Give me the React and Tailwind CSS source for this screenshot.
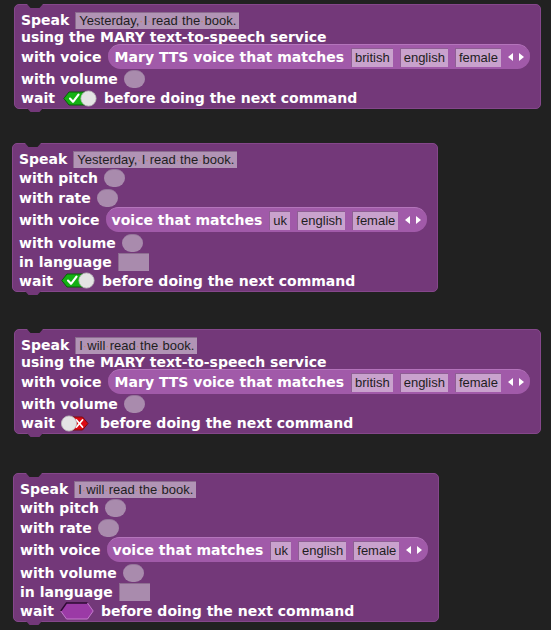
import React from "react";

function Label({ children }) {
  return (
    <span className="text-white font-bold text-[14px] leading-[16px] whitespace-pre font-['DejaVu_Sans',sans-serif]">
      {children}
    </span>
  );
}

function TextSlot({ text }) {
  const parts = text.split(" ");
  return (
    <span className="inline-flex items-center h-[17px] px-[3px] bg-[#b194b5] border-t border-l border-[#8b6b8f] font-['Liberation_Sans',Arial,sans-serif] text-[13px] leading-none text-[#1e1e1e] whitespace-pre">
      {parts.map((p, i) => (
        <React.Fragment key={i}>
          {i > 0 && <span className="text-[#c5876c]">·</span>}
          {p}
        </React.Fragment>
      ))}
    </span>
  );
}

function RoundSlot() {
  return <span className="inline-block w-[21px] h-[18px] rounded-full bg-[#a98bad] border-t border-[#94759a]" />;
}

function RectSlot() {
  return <span className="inline-block w-[31px] h-[18px] bg-[#a98bad] border-t border-l border-[#8d6d91]" />;
}

function PillSlot({ text }) {
  return (
    <span className="inline-flex items-center h-[19px] px-[3px] bg-[#c9a2cd] border-t border-l border-[#8e5f94] font-['Liberation_Sans',Arial,sans-serif] text-[13px] leading-none text-[#1e1e1e] whitespace-pre">
      {text}
    </span>
  );
}

function Arrows() {
  return (
    <span className="inline-flex items-center gap-[6px]">
      <span className="inline-block w-0 h-0 border-y-[4px] border-y-transparent border-r-[5px] border-r-white" />
      <span className="inline-block w-0 h-0 border-y-[4px] border-y-transparent border-l-[5px] border-l-white" />
    </span>
  );
}

function VoicePill({ label, slots, pl }) {
  return (
    <span
      className={
        "inline-flex items-center h-[25px] rounded-full bg-[#a15aa9] border-t border-[#b474bb] pr-[6px] gap-[7px] " +
        pl
      }
    >
      <Label>{label}</Label>
      {slots.map((s) => (
        <PillSlot key={s} text={s} />
      ))}
      <Arrows />
    </span>
  );
}

function ToggleOn() {
  return (
    <svg width="35" height="17" viewBox="0 0 35 17" className="ml-[2px]">
      <polygon points="0.8,8.5 6,2 24,2 24,15 6,15" fill="#14b014" stroke="#0b5a0b" strokeWidth="1" />
      <polyline points="7,8.6 10,11.8 15.5,4.6" fill="none" stroke="#fff" strokeWidth="2.2" strokeLinecap="round" strokeLinejoin="round" />
      <circle cx="25.5" cy="8.5" r="7.6" fill="#e4e4e4" stroke="#bdbdbd" strokeWidth="0.8" />
    </svg>
  );
}

function ToggleOff() {
  return (
    <svg width="33" height="17" viewBox="0 0 33 17">
      <polygon points="9,2 21.5,2 27,8.5 21.5,15 9,15" fill="#dc0a14" stroke="#7d0a10" strokeWidth="1" />
      <line x1="15.5" y1="5" x2="21.5" y2="12" stroke="#fff" strokeWidth="1.8" strokeLinecap="round" />
      <line x1="21.5" y1="5" x2="15.5" y2="12" stroke="#fff" strokeWidth="1.8" strokeLinecap="round" />
      <circle cx="8" cy="8.5" r="7.6" fill="#e4e4e4" stroke="#bdbdbd" strokeWidth="0.8" />
    </svg>
  );
}

function EmptyBool() {
  return (
    <svg width="35" height="18" viewBox="0 0 35 18">
      <polygon points="0.8,9 6.5,1 27.5,1 33.2,9 27.5,17 6.5,17" fill="#9b3aa6" />
      <polyline points="0.8,9 6.5,1 27.5,1" fill="none" stroke="#2e0a33" strokeWidth="1.4" />
      <polyline points="27.5,1 33.2,9 27.5,17 6.5,17 0.8,9" fill="none" stroke="#c47ccc" strokeWidth="1" />
    </svg>
  );
}

function Row({ h, children }) {
  return <div className={"flex items-center gap-[6px] " + h}>{children}</div>;
}

function Block({ className, children }) {
  return (
    <div
      className={
        "relative bg-[#733879] rounded-[5px] border border-[#85478b] pl-[6px] pt-[6px] pb-[1px] " + className
      }
    >
      <div className="absolute left-[12px] top-[-1px] w-[16px] h-[4px] bg-[#212121] [clip-path:polygon(0_0,100%_0,78%_100%,22%_100%)]" />
      <div className="absolute left-[12px] bottom-[-4px] w-[16px] h-[4px] bg-[#733879] [clip-path:polygon(0_0,100%_0,78%_100%,22%_100%)]" />
      {children}
    </div>
  );
}

function MaryBlock({ text, toggle, className }) {
  return (
    <Block className={className}>
      <Row h="h-[18px]">
        <Label>Speak</Label>
        <TextSlot text={text} />
      </Row>
      <Row h="h-[15px]">
        <Label>using the MARY text-to-speech service</Label>
      </Row>
      <Row h="h-[25px]">
        <Label>with voice</Label>
        <VoicePill label="Mary TTS voice that matches" slots={["british", "english", "female"]} pl="pl-[7px]" />
      </Row>
      <Row h="h-[20px]">
        <Label>with volume</Label>
        <RoundSlot />
      </Row>
      <Row h="h-[18px]">
        <Label>wait</Label>
        {toggle}
        <Label>before doing the next command</Label>
      </Row>
    </Block>
  );
}

function FullBlock({ text, toggle, className }) {
  return (
    <Block className={className}>
      <Row h="h-[18px]">
        <Label>Speak</Label>
        <TextSlot text={text} />
      </Row>
      <Row h="h-[20px]">
        <Label>with pitch</Label>
        <RoundSlot />
      </Row>
      <Row h="h-[19px]">
        <Label>with rate</Label>
        <RoundSlot />
      </Row>
      <Row h="h-[25px]">
        <Label>with voice</Label>
        <VoicePill label="voice that matches" slots={["uk", "english", "female"]} pl="pl-[6px]" />
      </Row>
      <Row h="h-[21px]">
        <Label>with volume</Label>
        <RoundSlot />
      </Row>
      <Row h="h-[18px]">
        <Label>in language</Label>
        <RectSlot />
      </Row>
      <Row h="h-[19px]">
        <Label>wait</Label>
        {toggle}
        <Label>before doing the next command</Label>
      </Row>
    </Block>
  );
}

export default function App() {
  return (
    <div className="min-h-[630px] w-[551px] bg-[#212121] pt-[4px] overflow-hidden">
      <MaryBlock className="ml-[14px] w-[527px]" text="Yesterday, I read the book." toggle={<ToggleOn />} />
      <FullBlock className="ml-[12px] mt-[34px] w-[426px]" text="Yesterday, I read the book." toggle={<ToggleOn />} />
      <MaryBlock className="ml-[14px] mt-[37px] w-[527px]" text="I will read the book." toggle={<ToggleOff />} />
      <FullBlock className="ml-[13px] mt-[39px] w-[426px]" text="I will read the book." toggle={<EmptyBool />} />
    </div>
  );
}
